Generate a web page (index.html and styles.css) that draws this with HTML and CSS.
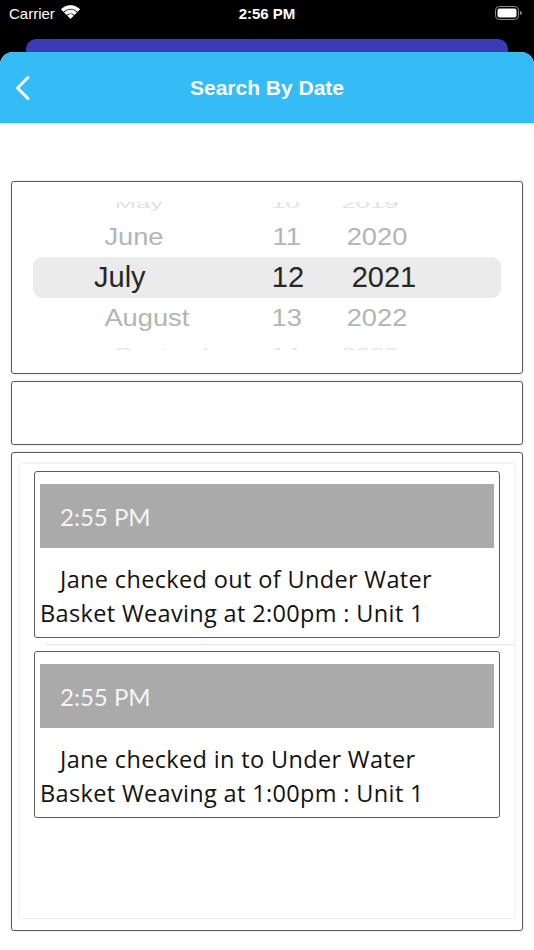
FILE: index.html
```html
<!DOCTYPE html>
<html>
<head>
<meta charset="utf-8">
<link rel="stylesheet" href="styles.css">
</head>
<body>
<div class="status">
  <div class="status-left">
    <span class="carrier">Carrier</span>
    <svg class="wifi" width="19" height="14" viewBox="0 0 19 14">
      <path d="M0.31 4.31 A13 13 0 0 1 18.69 4.31 L16.57 6.43 A10 10 0 0 0 2.43 6.43 Z" fill="#fff" stroke="#fff" stroke-width="0.8" stroke-linejoin="round"/>
      <path d="M3.49 7.49 A8.5 8.5 0 0 1 15.51 7.49 L13.39 9.61 A5.5 5.5 0 0 0 5.61 9.61 Z" fill="#fff" stroke="#fff" stroke-width="0.8" stroke-linejoin="round"/>
      <path d="M6.67 10.67 A4 4 0 0 1 12.33 10.67 L9.5 13.5 Z" fill="#fff" stroke="#fff" stroke-width="0.8" stroke-linejoin="round"/>
    </svg>
  </div>
  <div class="status-time">2:56 PM</div>
  <div class="status-right">
    <svg width="28" height="14" viewBox="0 0 28 14">
      <rect x="0.5" y="0.5" width="23" height="13" rx="3.8" fill="none" stroke="#8c8c8c" stroke-width="1"/>
      <rect x="2.5" y="2.5" width="19" height="9" rx="2" fill="#fff"/>
      <path d="M25 5 Q26.8 5 26.8 7 Q26.8 9 25 9 Z" fill="#8c8c8c"/>
    </svg>
  </div>
</div>
<div class="behind"></div>
<div class="sheet">
  <div class="navbar">
    <div class="nav-back">
      <svg width="18" height="26" viewBox="0 0 18 26">
        <path d="M14 2.5 L3.5 13 L14 23.5" fill="none" stroke="#fff" stroke-width="3" stroke-linecap="round" stroke-linejoin="round"/>
      </svg>
    </div>
    <div class="nav-title">Search By Date</div>
    <div></div>
  </div>
  <div class="content">
    <div class="box picker">
      <div class="wheel">
        <div class="wheel-rows">
          <div class="row far"><span class="m">May</span><span class="d">10</span><span class="y">2019</span></div>
          <div class="row near"><span class="m">June</span><span class="d">11</span><span class="y">2020</span></div>
          <div class="row sel"><span class="m">July</span><span class="d">12</span><span class="y">2021</span></div>
          <div class="row near"><span class="m">August</span><span class="d">13</span><span class="y">2022</span></div>
          <div class="row far far-bottom"><span class="m">September</span><span class="d">14</span><span class="y">2023</span></div>
        </div>
      </div>
    </div>
    <div class="box field"></div>
    <div class="box list">
      <div class="panel">
        <div class="cell first">
          <div class="card">
            <div class="card-head">2:55 PM</div>
            <div class="card-body">Jane checked out of Under Water Basket Weaving at 2:00pm : Unit 1</div>
          </div>
        </div>
        <div class="sep"></div>
        <div class="cell">
          <div class="card">
            <div class="card-head">2:55 PM</div>
            <div class="card-body">Jane checked in to Under Water Basket Weaving at 1:00pm : Unit 1</div>
          </div>
        </div>
      </div>
    </div>
  </div>
</div>
</body>
</html>
```
FILE: styles.css
```css
* { box-sizing: border-box; }
html, body { margin: 0; padding: 0; }
body {
  background: #000;
  width: 534px;
  height: 950px;
  overflow: hidden;
  font-family: "Liberation Sans", Arial, sans-serif;
}
.status {
  height: 39px;
  display: grid;
  grid-template-columns: 1fr auto 1fr;
  align-items: start;
  padding-top: 5px;
  color: #fff;
  font-size: 15px;
  line-height: 17px;
}
.status-left {
  display: flex;
  align-items: center;
  gap: 6px;
  padding-left: 9px;
}
.wifi { margin-top: -3px; }
.status-time {
  font-weight: 700;
  text-align: center;
}
.status-right {
  display: flex;
  justify-content: flex-end;
  padding-right: 11px;
  padding-top: 1px;
}
.behind {
  height: 13px;
  margin: 0 26px;
  background: #3a3bb5;
  border-radius: 10px 10px 0 0;
}
.sheet {
  background: #fff;
  border-radius: 13px 13px 0 0;
  overflow: hidden;
  height: 898px;
}
.navbar {
  height: 72px;
  background: #35bbf5;
  display: grid;
  grid-template-columns: 60px 1fr 60px;
  align-items: center;
  border-bottom: 1px solid #d4ecf8;
}
.nav-back {
  padding-left: 14px;
  display: flex;
  align-items: center;
  padding-top: 1px;
}
.nav-title {
  text-align: center;
  color: #fff;
  font-size: 21px;
  font-weight: 700;
}
.content {
  padding: 57px 11px 0;
  display: flex;
  flex-direction: column;
  gap: 7px;
}
.box {
  border: 1px solid #585858;
  border-radius: 3px;
  background: #fff;
  box-shadow: 0 0 3px rgba(0,0,0,0.12);
}
.picker { height: 193px; padding-top: 20px; }
.wheel {
  height: 148px;
  overflow: hidden;
}
.wheel-rows { margin-top: -13px; }
.row {
  display: grid;
  grid-template-columns: 150px 88px 104px;
  padding-left: 82px;
  align-items: center;
  font-size: 29px;
  transform-origin: 50% 50%;
}
.row .d, .row .y { text-align: center; }
.row.far {
  height: 28px;
  color: #e2e2e2;
  transform: scale(0.88, 0.45);
}
.row.near {
  height: 40px;
  color: #b4b4b4;
  transform: scale(0.94, 0.8);
}
.row.sel {
  height: 41px;
  margin: 0 21px;
  padding-left: 61px;
  background: #ebebeb;
  border-radius: 9px;
  color: #262626;
}
.field { height: 64px; }
.list {
  height: 479px;
  padding: 11px 8px 12px;
}
.panel {
  height: 100%;
  background: #fff;
  box-shadow: 0 0 4px rgba(0,0,0,0.13);
}
.cell { padding: 6px 14px 6px; }
.cell.first { padding-top: 7px; }
.sep {
  height: 1px;
  margin-left: 26px;
  background: #e2e2e2;
}
.card {
  border: 1px solid #5c5c5c;
  border-radius: 3px;
  padding: 12px 5px 7px;
}
.card-head {
  height: 64px;
  background: #aaaaaa;
  color: #f5f5f5;
  font-family: Lato, "Open Sans", sans-serif;
  font-size: 24px;
  display: flex;
  align-items: center;
  padding-left: 20px;
}
.card-body {
  margin-top: 14px;
  padding-right: 20px;
  font-family: "Open Sans", Lato, sans-serif;
  font-size: 23.5px;
  letter-spacing: 0.35px;
  line-height: 34px;
  color: #111;
  text-indent: 20px;
}
```
